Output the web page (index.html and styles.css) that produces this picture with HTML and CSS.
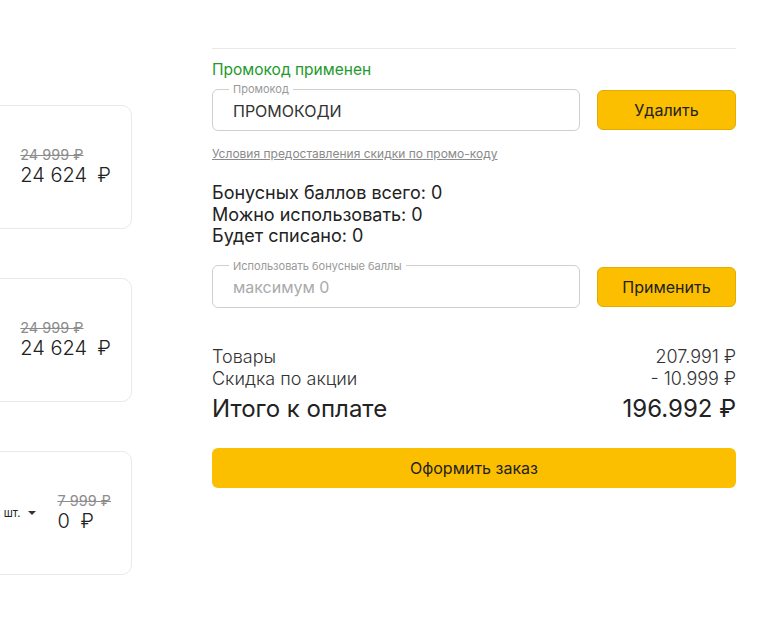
FILE: index.html
```html
<!DOCTYPE html>
<html lang="ru">
    <head>
        <meta charset="UTF-8">
        <title>Корзина</title>
        <link rel="stylesheet" href="styles.css">
    </head>
    <body>
        <div id="cart">
            <div class="items">
                <div class="item">
                    <div class="price">
                        <span class="old-price">24 999 ₽</span>
                        <span class="new-price">24 624 <span class="rub">₽</span></span>
                    </div>
                </div>
                <div class="item">
                    <div class="price">
                        <span class="old-price">24 999 ₽</span>
                        <span class="new-price">24 624 <span class="rub">₽</span></span>
                    </div>
                </div>
                <div class="item">
                    <div class="qty">
                        <span>шт.</span>
                        <span class="caret"></span>
                    </div>
                    <div class="price">
                        <span class="old-price">7 999 ₽</span>
                        <span class="new-price">0 <span class="rub">₽</span></span>
                    </div>
                </div>
            </div>

            <div class="summary">
                <div class="promo-status">Промокод применен</div>
                <div class="field-row">
                    <fieldset class="field">
                        <legend>Промокод</legend>
                        <input type="text" value="ПРОМОКОДИ">
                    </fieldset>
                    <button class="btn">Удалить</button>
                </div>
                <a class="terms" href="#">Условия предоставления скидки по промо-коду</a>

                <div class="bonus">
                    <p>Бонусных баллов всего: 0</p>
                    <p>Можно использовать: 0</p>
                    <p>Будет списано: 0</p>
                </div>
                <div class="field-row">
                    <fieldset class="field">
                        <legend>Использовать бонусные баллы</legend>
                        <input type="text" placeholder="максимум 0">
                    </fieldset>
                    <button class="btn">Применить</button>
                </div>

                <div class="totals">
                    <div class="line"><span>Товары</span><span>207.991 ₽</span></div>
                    <div class="line"><span>Скидка по акции</span><span>- 10.999 ₽</span></div>
                    <div class="line total"><span>Итого к оплате</span><span>196.992 ₽</span></div>
                </div>
                <button class="btn btn-order">Оформить заказ</button>
            </div>
        </div>
    </body>
</html>
```
FILE: styles.css
```css
*{
    margin:0;
    padding:0;
    box-sizing:border-box;
}
body{
    font-family:Inter, "Noto Sans", sans-serif;
    color:#222;
    background:#fff;
    overflow:hidden;
}
#cart{
    display:flex;
    gap:80px;
}

/* left column: product cards, cut by the window edge */
.items{
    width:132px;
    padding-top:105px;
    display:flex;
    flex-direction:column;
    gap:49px;
}
.item{
    width:400px;
    height:124px;
    margin-left:-268px;
    border:1px solid #e9e9e9;
    border-radius:10px;
    display:flex;
    justify-content:flex-end;
    align-items:center;
    padding-right:20px;
}
.price{
    display:flex;
    flex-direction:column;
}
.old-price{
    font-size:14.5px;
    line-height:17px;
    color:#8c8c8c;
    text-decoration:line-through;
}
.new-price{
    font-size:20px;
    line-height:25px;
    font-weight:300;
    color:#222;
}
.rub{
    margin-left:5px;
}
.qty{
    font-size:11px;
    margin-right:21px;
    display:flex;
    align-items:center;
    gap:8px;
}
.caret{
    width:0;
    height:0;
    border-left:4px solid transparent;
    border-right:4px solid transparent;
    border-top:4px solid #333;
}

/* right column */
.summary{
    width:524px;
    padding-top:48px;
}
.summary::before{
    content:"";
    display:block;
    height:1px;
    background:#e8e8e8;
}
.promo-status{
    margin-top:11px;
    font-size:15.5px;
    line-height:20px;
    color:#229a2c;
}
.field-row{
    display:flex;
    align-items:flex-end;
    gap:17px;
    margin-top:2px;
}
.field{
    width:368px;
    border:1px solid #cfcfcf;
    border-radius:6px;
    padding:0 16px 5px;
}
.field legend{
    font-size:11px;
    line-height:14px;
    color:#999;
    padding:0 4px;
}
.field input{
    width:100%;
    height:29px;
    border:none;
    outline:none;
    padding:0 4px;
    font-family:inherit;
    font-size:16px;
    color:#333;
    background:none;
}
.field input::placeholder{
    color:#aaa;
}
.btn{
    width:139px;
    height:40px;
    margin-bottom:1px;
    background:#fbbf00;
    border:1px solid #e3ad00;
    border-radius:6px;
    font-family:inherit;
    font-size:16px;
    color:#222;
}
.terms{
    display:inline-block;
    margin-top:15px;
    font-size:12px;
    color:#8a8a8a;
}
.bonus{
    margin-top:20px;
    font-size:18px;
    line-height:21.5px;
}
.bonus + .field-row{
    margin-top:12px;
}
.totals{
    margin-top:38px;
}
.line{
    display:flex;
    justify-content:space-between;
    font-size:18px;
    line-height:22px;
    font-weight:300;
    color:#333;
}
.line.total{
    margin-top:4px;
    font-size:24px;
    line-height:30px;
    font-weight:400;
    color:#222;
}
.btn-order{
    width:100%;
    margin-top:24px;
    border:none;
}
```
